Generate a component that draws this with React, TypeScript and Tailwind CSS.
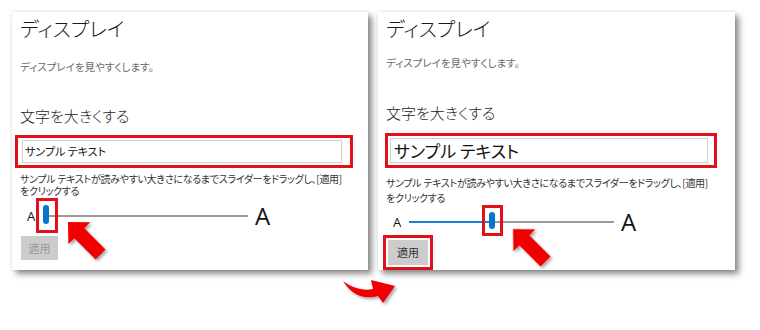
import React from "react";

const jp = "font-['Noto_Sans_CJK_JP','Noto_Sans',sans-serif] [font-feature-settings:'palt']";

type Props = { after?: boolean };

function Slider({ after }: Props) {
  return (
    <div className="flex items-center h-[24px] pl-[7px]">
      <span className="w-[16px] text-[13px] leading-none text-[#111] font-['Open_Sans',sans-serif]">A</span>
      <div className="relative w-[205px] h-[2px] bg-[#9a9a9a]">
        {after && <div className="absolute left-0 top-0 h-[2px] w-[80px] bg-[#1a7fd4]" />}
        <div className={after ? "absolute left-[80px] top-[-9px] w-[6px] h-[17px] rounded-full bg-[#0a73d1]" : "absolute left-0 top-[-10px] w-[6px] h-[19px] rounded-full bg-[#0a73d1]"}>
          <div className={after ? "absolute left-[-7px] top-[-7px] w-[21px] h-[31px] border-[3px] border-[#e3101c]" : "absolute left-[-7px] top-[-7px] w-[22px] h-[35px] border-[3px] border-[#e3101c]"} />
        </div>
      </div>
      <span className="ml-[7px] text-[24px] leading-none text-[#111] font-['Open_Sans',sans-serif]">A</span>
    </div>
  );
}

function Panel({ after }: Props) {
  return (
    <div className={`${jp} bg-white h-[258px] px-2 pt-[3px] shadow-[4px_4px_6px_rgba(0,0,0,0.45),0_0_3px_rgba(0,0,0,0.12)] ${after ? "w-[357px]" : "w-[356px]"}`}>
      <h1 className="text-[20px] leading-[28px] text-[#1b1b1b] font-light">ディスプレイ</h1>
      <p className={`text-[10.5px] leading-[14px] text-[#6a6a6a] ${after ? "mt-[13px]" : "mt-[17px]"}`}>ディスプレイを見やすくします。</p>
      <h2 className={`text-[15px] leading-[20px] text-[#222] font-light ${after ? "mt-[33px]" : "mt-[32px]"}`}>文字を大きくする</h2>

      {/* サンプル テキスト */}
      <div className={after ? "mt-[10px] ml-[-1px] w-[332px] border-[3px] border-[#e3101c] pl-[2px] pr-[6px] py-[2px]" : "mt-[9px] ml-[-5px] w-[338px] border-[3px] border-[#e3101c] pl-[4px] pr-[8px] py-[2px]"}>
        <div className={after ? "h-[25px] border border-[#cfcfcf] flex items-center px-[3px] text-[17px] text-[#111]" : "h-[23px] border border-[#cfcfcf] flex items-center px-[2px] text-[11px] text-[#111]"}>
          サンプル テキスト
        </div>
      </div>

      <div className={`text-[10px] tracking-[-0.3px] whitespace-nowrap text-[#333] ${after ? "mt-[7px] leading-[15px]" : "mt-[5px] leading-[12px]"}`}>
        <p>サンプル テキストが読みやすい大きさになるまでスライダーをドラッグし、[適用]</p>
        <p>をクリックする</p>
      </div>

      <div className={after ? "mt-[5px]" : "mt-[7px]"}>
        <Slider after={after} />
      </div>

      {after ? (
        <div className="mt-[1px] ml-[-3px] w-[50px] border-[3px] border-[#e3101c] p-[2px]">
          <div className="h-[25px] bg-[#cccccc] flex items-center justify-center text-[11px] text-[#333]">適用</div>
        </div>
      ) : (
        <div className="mt-[8px] ml-[1px] w-[37px] h-[24px] bg-[#cccccc] flex items-center justify-center text-[11px] text-[#9a9a9a]">適用</div>
      )}
    </div>
  );
}

export default function App() {
  const arrow = "0,0 -16,-15.5 -16,-7 -46,-7 -46,7 -16,7 -16,15.5";
  return (
    <div className="relative w-[760px] h-[330px] bg-white overflow-hidden flex gap-[10px] pl-[12px] pt-[12px]">
      <Panel />
      <Panel after />

      {/* 赤い矢印 */}
      <svg className="absolute inset-0 pointer-events-none" width="760" height="330" viewBox="0 0 760 330">
        <defs>
          <filter id="sh" x="-20%" y="-20%" width="150%" height="150%">
            <feDropShadow dx="2" dy="2" stdDeviation="1.5" floodColor="#000" floodOpacity="0.35" />
          </filter>
        </defs>
        <g filter="url(#sh)" fill="#f00000">
          <polygon points={arrow} transform="translate(68 222) rotate(225)" />
          <polygon points={arrow} transform="translate(513 229) rotate(225)" />
          <path d="M343 281 Q357 292 373 289 L371 280 L395 286 L383 303 L378 296 Q356 302 343 281 Z" />
        </g>
      </svg>
    </div>
  );
}
